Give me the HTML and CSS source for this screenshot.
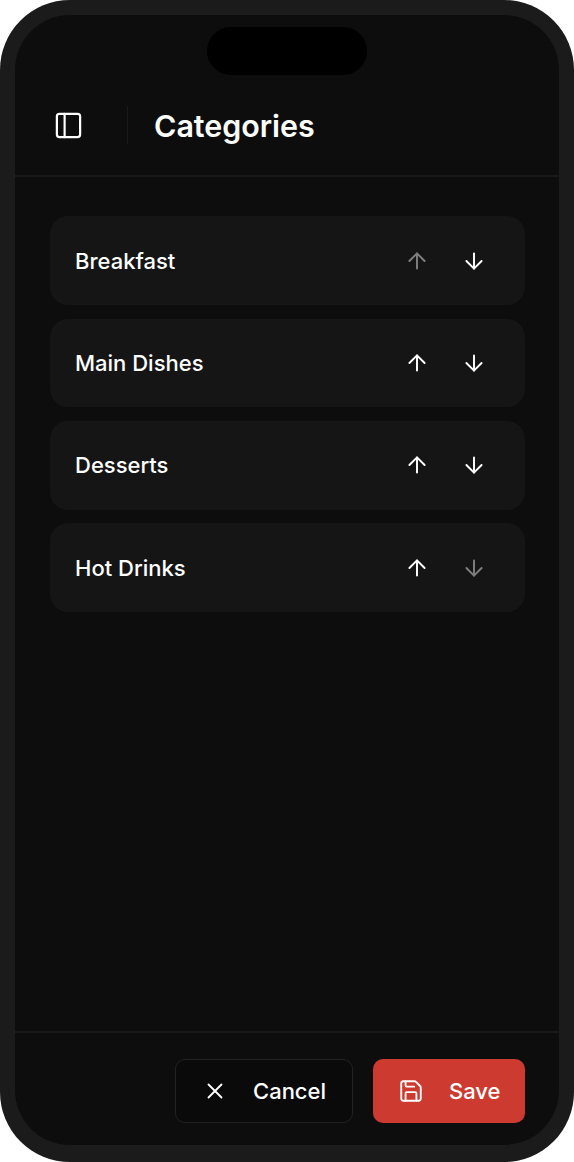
FILE: index.html
```html
<!DOCTYPE html>
<html lang="en">
<head>
<meta charset="utf-8">
<title>Categories</title>
<link rel="stylesheet" href="styles.css">
</head>
<body>
<div class="device">
  <div class="notch"></div>
  <div class="screen">
    <header class="header">
      <button class="icon-btn sidebar" aria-label="Toggle sidebar">
        <svg width="31" height="31" viewBox="0 0 24 24" fill="none" stroke="currentColor" stroke-width="1.7" stroke-linecap="round" stroke-linejoin="round"><rect x="3" y="3" width="18" height="18" rx="2"/><path d="M9 3v18"/></svg>
      </button>
      <span class="divider"></span>
      <h1 class="title">Categories</h1>
    </header>
    <main class="list">
      <div class="row"><span class="name">Breakfast</span>
        <div class="arrows">
          <svg class="arrow off" width="26" height="26" viewBox="0 0 24 24" fill="none" stroke="currentColor" stroke-width="1.8" stroke-linecap="round" stroke-linejoin="round"><path d="m5 12 7-7 7 7"/><path d="M12 19V5"/></svg>
          <svg class="arrow" width="26" height="26" viewBox="0 0 24 24" fill="none" stroke="currentColor" stroke-width="1.8" stroke-linecap="round" stroke-linejoin="round"><path d="M12 5v14"/><path d="m19 12-7 7-7-7"/></svg>
        </div>
      </div>
      <div class="row"><span class="name">Main Dishes</span>
        <div class="arrows">
          <svg class="arrow" width="26" height="26" viewBox="0 0 24 24" fill="none" stroke="currentColor" stroke-width="1.8" stroke-linecap="round" stroke-linejoin="round"><path d="m5 12 7-7 7 7"/><path d="M12 19V5"/></svg>
          <svg class="arrow" width="26" height="26" viewBox="0 0 24 24" fill="none" stroke="currentColor" stroke-width="1.8" stroke-linecap="round" stroke-linejoin="round"><path d="M12 5v14"/><path d="m19 12-7 7-7-7"/></svg>
        </div>
      </div>
      <div class="row"><span class="name">Desserts</span>
        <div class="arrows">
          <svg class="arrow" width="26" height="26" viewBox="0 0 24 24" fill="none" stroke="currentColor" stroke-width="1.8" stroke-linecap="round" stroke-linejoin="round"><path d="m5 12 7-7 7 7"/><path d="M12 19V5"/></svg>
          <svg class="arrow" width="26" height="26" viewBox="0 0 24 24" fill="none" stroke="currentColor" stroke-width="1.8" stroke-linecap="round" stroke-linejoin="round"><path d="M12 5v14"/><path d="m19 12-7 7-7-7"/></svg>
        </div>
      </div>
      <div class="row"><span class="name">Hot Drinks</span>
        <div class="arrows">
          <svg class="arrow" width="26" height="26" viewBox="0 0 24 24" fill="none" stroke="currentColor" stroke-width="1.8" stroke-linecap="round" stroke-linejoin="round"><path d="m5 12 7-7 7 7"/><path d="M12 19V5"/></svg>
          <svg class="arrow off" width="26" height="26" viewBox="0 0 24 24" fill="none" stroke="currentColor" stroke-width="1.8" stroke-linecap="round" stroke-linejoin="round"><path d="M12 5v14"/><path d="m19 12-7 7-7-7"/></svg>
        </div>
      </div>
    </main>
    <footer class="footer">
      <button class="btn cancel">
        <svg width="26" height="26" viewBox="0 0 24 24" fill="none" stroke="currentColor" stroke-width="1.7" stroke-linecap="round" stroke-linejoin="round"><path d="M18 6 6 18"/><path d="m6 6 12 12"/></svg>
        <span>Cancel</span>
      </button>
      <button class="btn save">
        <svg width="26" height="26" viewBox="0 0 24 24" fill="none" stroke="currentColor" stroke-width="1.7" stroke-linecap="round" stroke-linejoin="round"><path d="M15.2 3a2 2 0 0 1 1.4.6l3.8 3.8a2 2 0 0 1 .6 1.4V19a2 2 0 0 1-2 2H5a2 2 0 0 1-2-2V5a2 2 0 0 1 2-2z"/><path d="M17 21v-7a1 1 0 0 0-1-1H8a1 1 0 0 0-1 1v7"/><path d="M7 3v4a1 1 0 0 0 1 1h7"/></svg>
        <span>Save</span>
      </button>
    </footer>
  </div>
</div>
</body>
</html>
```
FILE: styles.css
```css
* { box-sizing: border-box; }
html, body { margin: 0; padding: 0; background: #fff; }
body { width: 574px; height: 1162px; overflow: hidden; font-family: Inter, "Liberation Sans", sans-serif; color: #fff; }
button { font: inherit; color: inherit; background: none; border: 0; padding: 0; }

.device { position: relative; width: 574px; height: 1162px; background: #1b1b1b; border-radius: 70px; padding: 15px 15px 17px; }
.notch { position: absolute; top: 27px; left: 207px; width: 160px; height: 48px; border-radius: 24px; background: #000; }
.screen { width: 544px; height: 1130px; background: #0d0d0d; border-radius: 55px; display: flex; flex-direction: column; overflow: hidden; }

.header { height: 162px; flex: none; padding: 72px 0 0 38px; display: flex; align-items: flex-start; border-bottom: 2px solid #191919; }
.icon-btn { width: 31px; height: 38px; display: flex; align-items: center; justify-content: center; }
.sidebar { margin-top: 19px; }
.divider { width: 1px; height: 38px; margin: 19px 0 0 43px; background: #1a1a1a; }
.title { margin: 20px 0 0 26px; font-size: 30.4px; line-height: 38px; font-weight: 600; letter-spacing: 0; }

.list { flex: 1; padding: 39.2px 34px 0 35px; display: flex; flex-direction: column; gap: 13.6px; }
.row { height: 88.8px; flex: none; background: #151515; border-radius: 18px; padding: 0 38px 0 25px; display: flex; align-items: center; justify-content: space-between; }
.name { font-size: 22px; font-weight: 500; }
.arrows { display: flex; gap: 31px; }
.arrow.off { opacity: 0.45; }

.footer { height: 114px; flex: none; border-top: 2px solid #191919; padding: 26px 34px 0 0; display: flex; justify-content: flex-end; align-items: flex-start; gap: 20px; }
.btn { height: 64px; border-radius: 10px; display: flex; align-items: center; font-size: 22px; font-weight: 500; }
.cancel { width: 178px; border: 1px solid #232323; background: #0a0a0a; padding-left: 26px; gap: 25px; }
.save { width: 152px; background: #cd3a30; padding-left: 25px; gap: 25px; }
```
